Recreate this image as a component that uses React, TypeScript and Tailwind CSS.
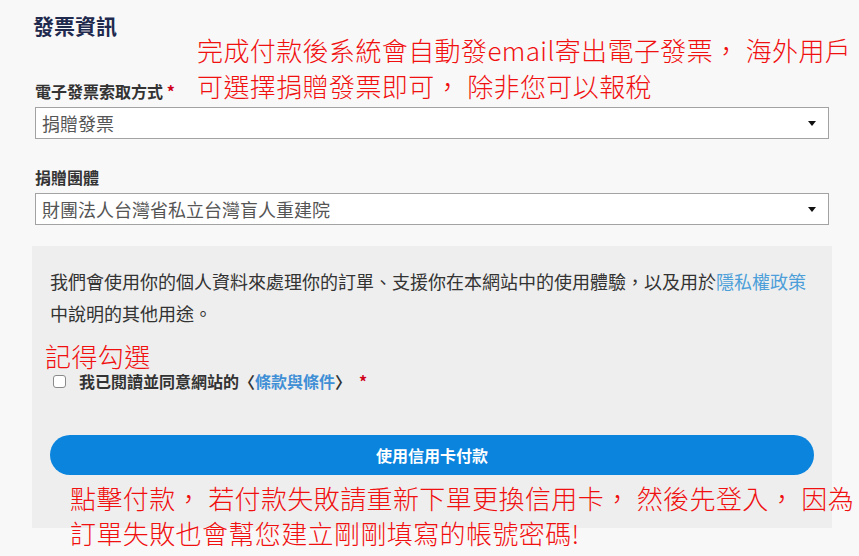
const font = { fontFamily: '"Noto Sans CJK TC", "Noto Sans", sans-serif' };

function SelectBox({ value }: { value: string }) {
  return (
    <div className="flex h-[32px] items-center justify-between border border-[#a3a3a3] bg-white pl-[6px] pr-[12px]">
      <span className="text-[18px] leading-none text-[#555]">{value}</span>
      <span className="h-0 w-0 border-x-[4px] border-t-[5px] border-x-transparent border-t-[#111]" />
    </div>
  );
}

export default function App() {
  return (
    <div className="relative h-[556px] w-full overflow-hidden bg-[#f8f8f8]" style={font}>
      <div className="ml-[32px] w-[800px] pt-[10px]">
        <h2 className="pl-[1px] text-[21px] font-bold leading-[30px] text-[#1f2a4e]">發票資訊</h2>

        <div className="px-[3px]">
          <label className="mt-[41px] block text-[16px] font-bold leading-[20px] text-[#333]">
            電子發票索取方式 <span className="text-[#d0021b]">*</span>
          </label>
          <div className="mt-[6px]">
            <SelectBox value="捐贈發票" />
          </div>

          <label className="mt-[28px] block text-[16px] font-bold leading-[20px] text-[#333]">捐贈團體</label>
          <div className="mt-[6px]">
            <SelectBox value="財團法人台灣省私立台灣盲人重建院" />
          </div>
        </div>

        <div className="mt-[21px] h-[282px] bg-[#eeeeee] px-[18px] pt-[19px]">
          <p className="text-[18px] leading-[32px] text-[#333]">
            我們會使用你的個人資料來處理你的訂單、支援你在本網站中的使用體驗，以及用於
            <span className="text-[#4d9fd9]">隱私權政策</span>
            中說明的其他用途。
          </p>

          <div className="mt-[42px] flex items-center gap-[13px] pl-[3px] leading-[20px]">
            <span className="h-[13px] w-[13px] rounded-[3px] border border-[#8a8a8a] bg-white" />
            <span className="text-[16px] font-bold text-[#333]">
              我已閱讀並同意網站的〈<span className="text-[#3f8fd6]">條款與條件</span>〉
              <span className="ml-[8px] text-[#d0021b]">*</span>
            </span>
          </div>

          <button className="mt-[44px] flex h-[40px] w-full items-center justify-center rounded-full bg-[#0b84de] text-[16px] font-bold text-white">
            使用信用卡付款
          </button>
        </div>
      </div>

      {/* red annotations drawn over the form */}
      <div className="absolute left-[197px] top-[32px] whitespace-nowrap text-[26px] font-light leading-[36px] tracking-[0.4px] text-[#f01010]">
        <div>完成付款後系統會自動發email寄出電子發票， 海外用戶</div>
        <div>可選擇捐贈發票即可， 除非您可以報稅</div>
      </div>
      <div className="absolute left-[45px] top-[341px] text-[26px] font-light leading-[30px] tracking-[0.4px] text-[#f01010]">記得勾選</div>
      <div className="absolute left-[70px] top-[480px] whitespace-nowrap text-[26px] font-light leading-[35px] tracking-[0.4px] text-[#f01010]">
        <div>點擊付款， 若付款失敗請重新下單更換信用卡， 然後先登入， 因為</div>
        <div>訂單失敗也會幫您建立剛剛填寫的帳號密碼!</div>
      </div>
    </div>
  );
}
